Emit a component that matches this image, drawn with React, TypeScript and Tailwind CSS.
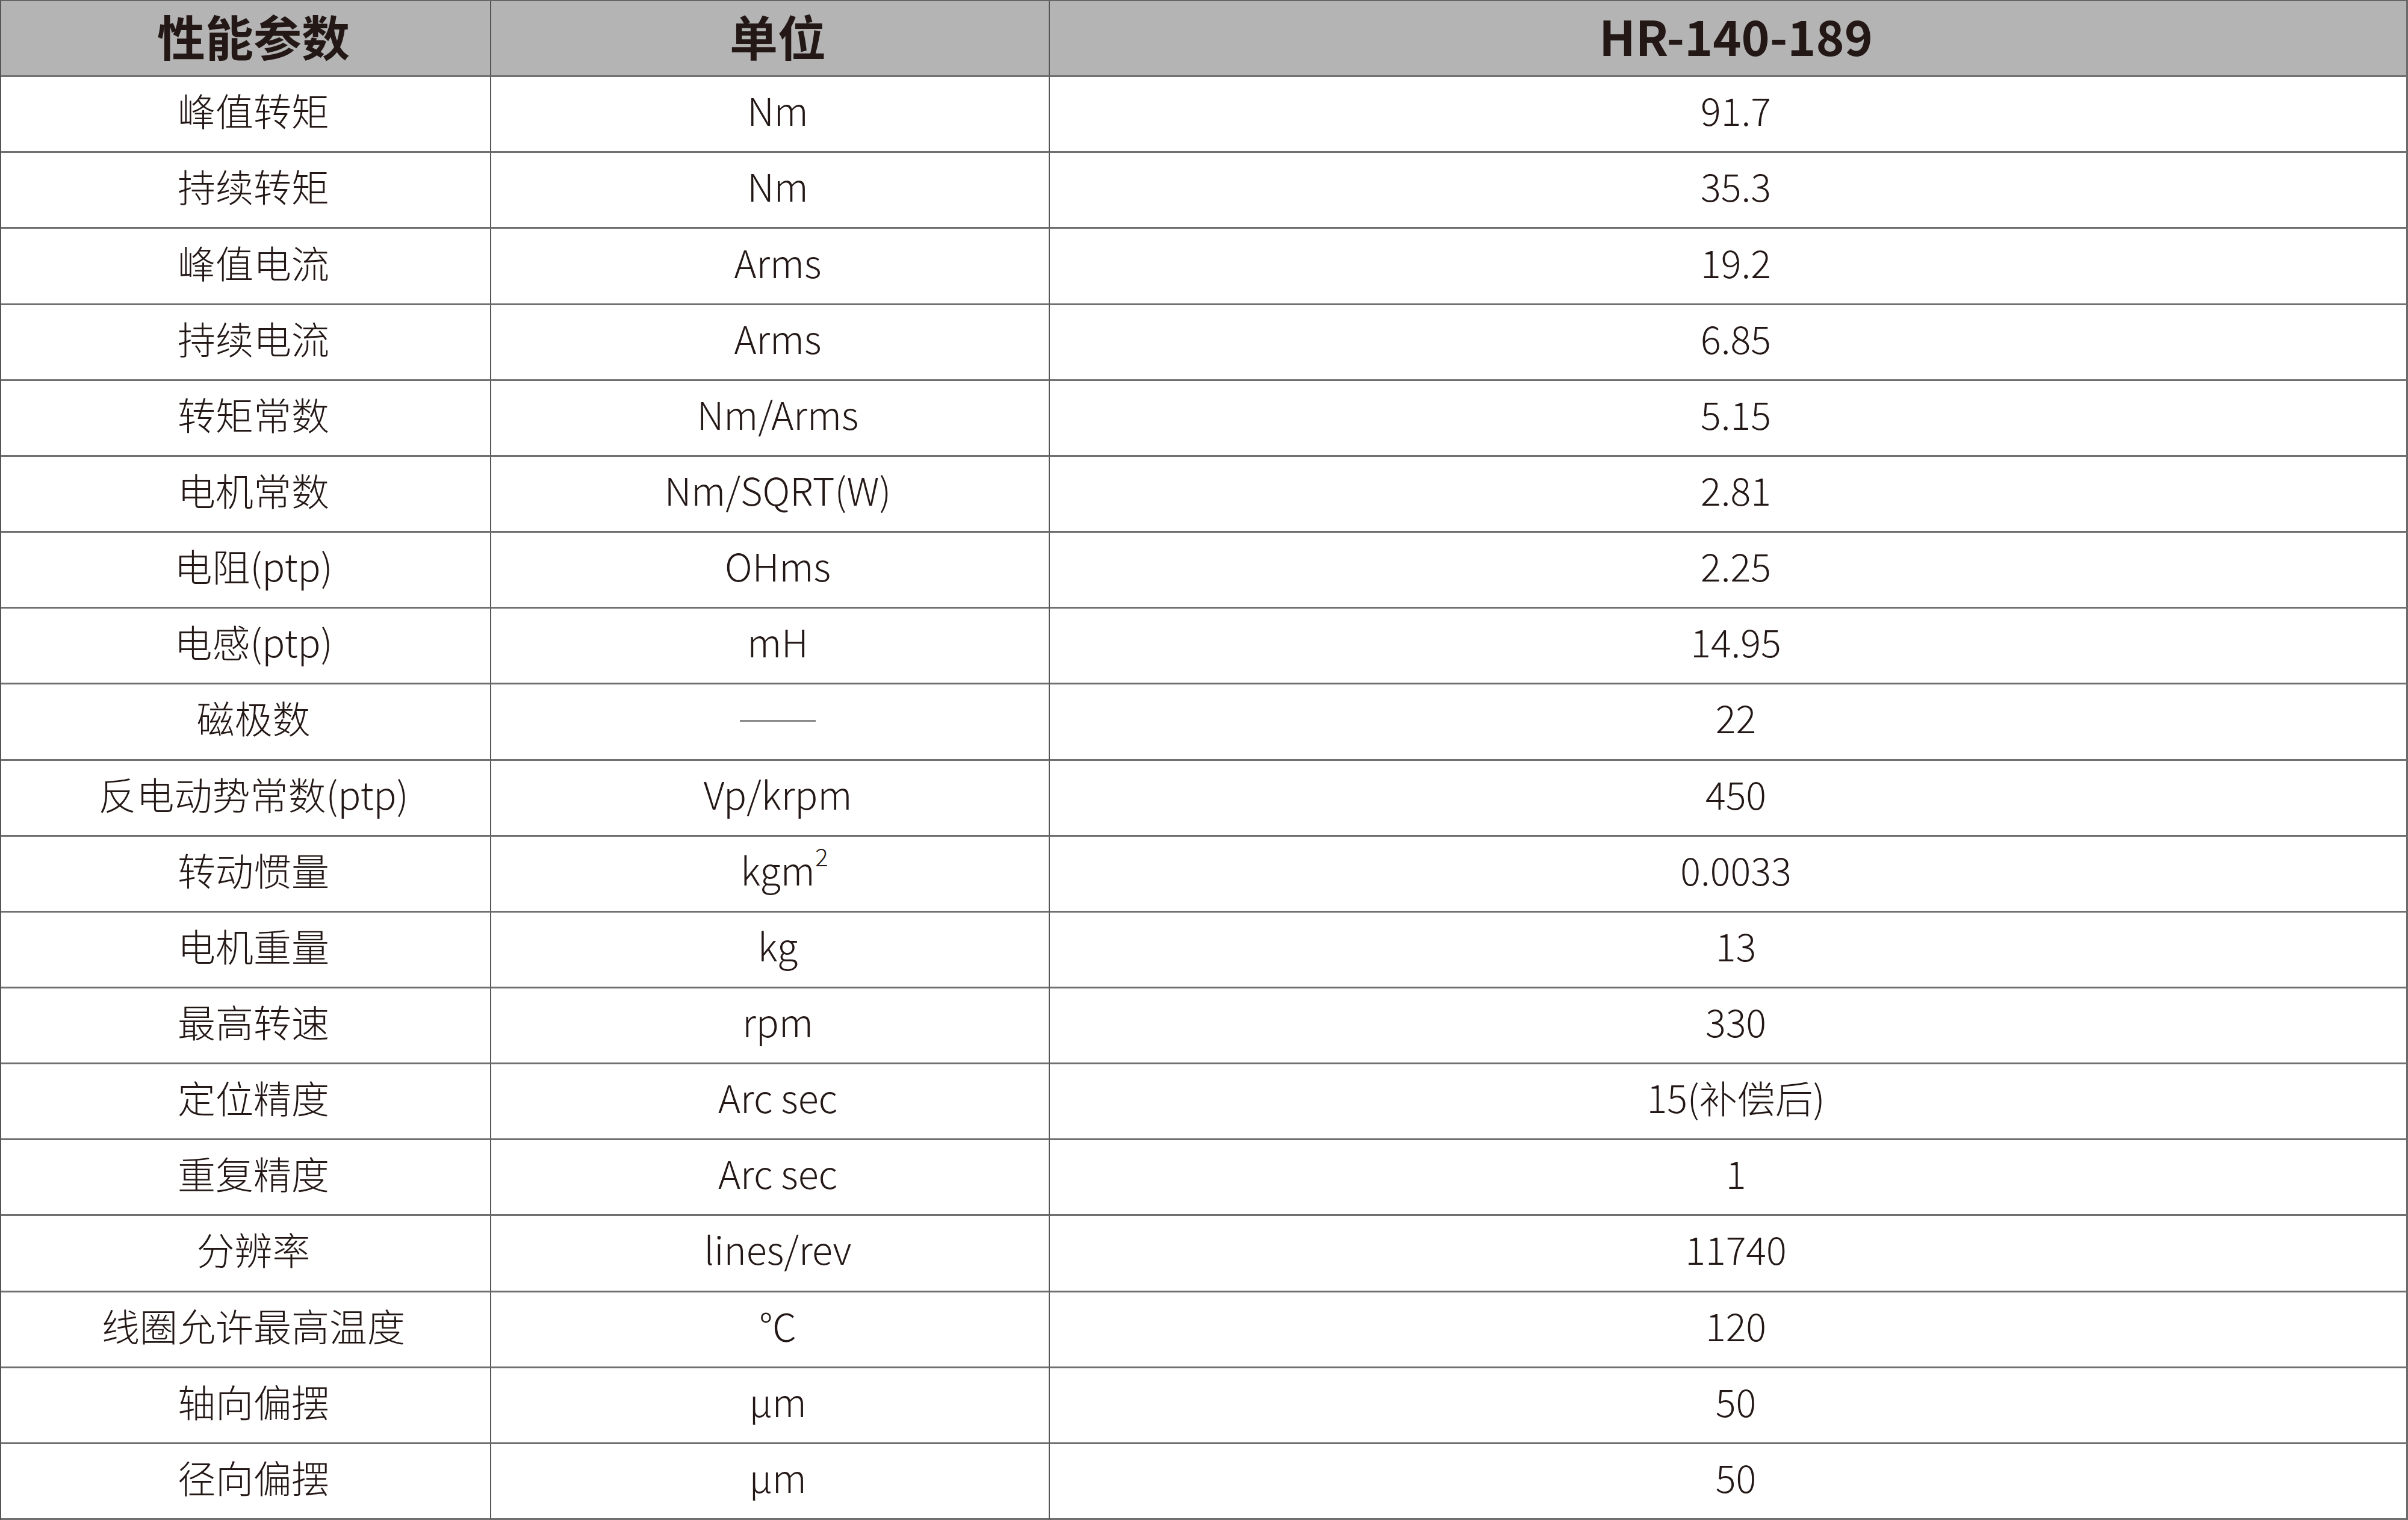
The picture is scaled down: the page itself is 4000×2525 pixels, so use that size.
import React from "react";

type Row = { name: string; unit: React.ReactNode; value: string };

const rows: Row[] = [
  { name: "峰值转矩", unit: "Nm", value: "91.7" },
  { name: "持续转矩", unit: "Nm", value: "35.3" },
  { name: "峰值电流", unit: "Arms", value: "19.2" },
  { name: "持续电流", unit: "Arms", value: "6.85" },
  { name: "转矩常数", unit: "Nm/Arms", value: "5.15" },
  { name: "电机常数", unit: "Nm/SQRT(W)", value: "2.81" },
  { name: "电阻(ptp)", unit: "OHms", value: "2.25" },
  { name: "电感(ptp)", unit: "mH", value: "14.95" },
  { name: "磁极数", unit: <span className="block w-[126px] h-[3px] bg-[#8c8c8c] mt-[14px]" />, value: "22" },
  { name: "反电动势常数(ptp)", unit: "Vp/krpm", value: "450" },
  {
    name: "转动惯量",
    unit: (
      <span className="relative">
        kgm<span className="absolute right-[-22px] top-[-10px] text-[40px]">2</span>
      </span>
    ),
    value: "0.0033",
  },
  { name: "电机重量", unit: "kg", value: "13" },
  { name: "最高转速", unit: "rpm", value: "330" },
  { name: "定位精度", unit: "Arc sec", value: "15(补偿后)" },
  { name: "重复精度", unit: "Arc sec", value: "1" },
  { name: "分辨率", unit: "lines/rev", value: "11740" },
  { name: "线圈允许最高温度", unit: "℃", value: "120" },
  { name: "轴向偏摆", unit: "μm", value: "50" },
  { name: "径向偏摆", unit: "μm", value: "50" },
];

const font = "font-['Noto_Sans_CJK_SC','Noto_Sans',sans-serif]";

function Cell({ children, head, last }: { children: React.ReactNode; head?: boolean; last?: boolean }) {
  return (
    <div
      className={
        "flex items-center justify-center pl-[26px] border-b-[3px] border-b-[#707070] " +
        (last ? "border-r-[3px] border-r-[#6a6a6a] " : "border-r-2 border-r-[#555555] ") +
        (head ? "bg-[#b4b4b5] font-bold text-[80px] pb-[12px]" : "bg-white font-light text-[63px] pb-[16px]")
      }
    >
      {children}
    </div>
  );
}

export default function App() {
  return (
    <div
      className={
        font +
        " w-[4000px] h-[2525px] grid grid-cols-[814px_928px_1fr] grid-rows-[repeat(20,minmax(0,1fr))] bg-white text-[#231815] border-l-2 border-l-[#555555] border-t-2 border-t-[#666666] leading-none"
      }
    >
      <Cell head>性能参数</Cell>
      <Cell head>单位</Cell>
      <Cell head last>HR-140-189</Cell>
      {rows.map((r) => (
        <React.Fragment key={r.name}>
          <Cell>{r.name}</Cell>
          <Cell>{r.unit}</Cell>
          <Cell last>{r.value}</Cell>
        </React.Fragment>
      ))}
    </div>
  );
}
